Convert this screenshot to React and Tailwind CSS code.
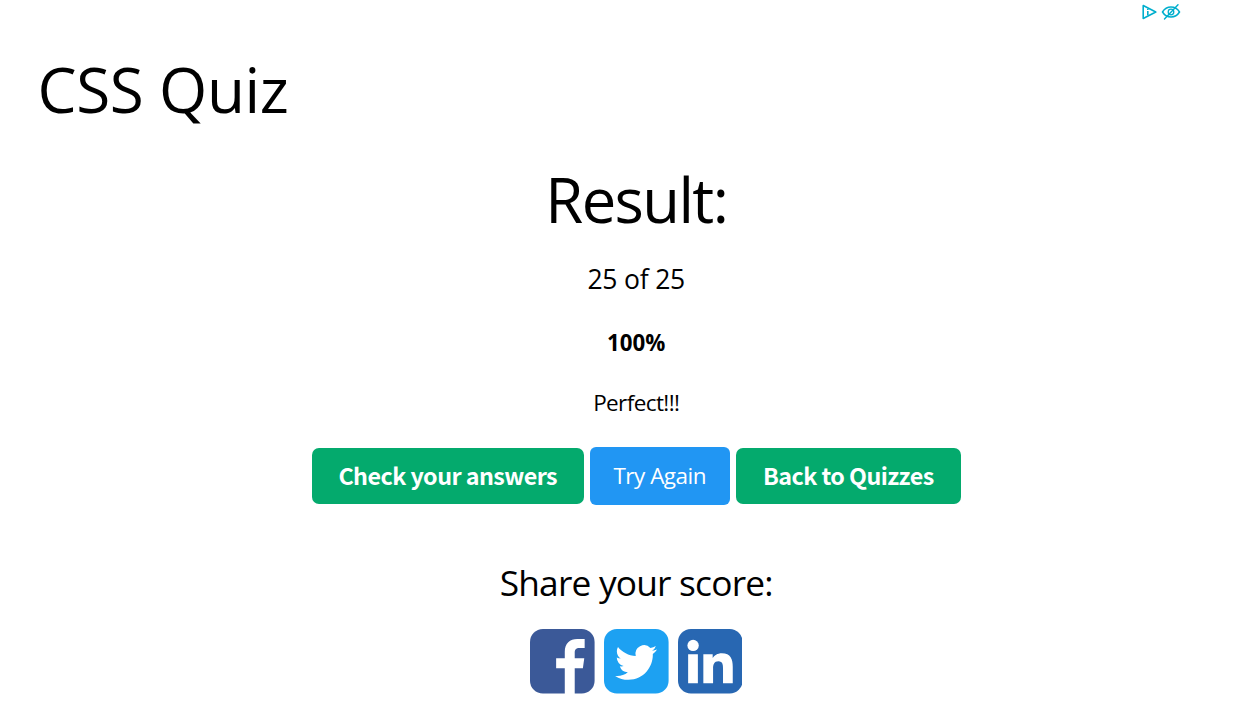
const GREEN =
  "flex h-14 items-center justify-center rounded-[7px] bg-[#04aa6d] pb-[2px] font-['Noto_Sans_CJK_SC',sans-serif] text-[23.3px] font-bold tracking-[-0.55px] text-white whitespace-nowrap";

function AdIcons() {
  return (
    <div className="flex h-6 justify-end gap-[4px] pt-[4px] pr-[74px]">
      <svg width="16" height="16" viewBox="0 0 16 16" fill="none" stroke="#00aecd" strokeWidth="1.6" strokeLinejoin="round">
        <path d="M2.2 1.5v13L14.8 8z" />
        <path d="M6.8 7v4.3M6.8 4.7v1.3" />
      </svg>
      <svg width="20" height="16" viewBox="0 0 20 16" fill="none" stroke="#00aecd" strokeWidth="1.5" strokeLinecap="round">
        <path d="M1.5 8C5.5 1.4 14.5 1.4 18.5 8C14.5 14.6 5.5 14.6 1.5 8z" />
        <circle cx="10" cy="8" r="2.8" strokeWidth="1.3" />
        <path d="M3.5 15L17 0.8" strokeWidth="1.4" />
      </svg>
    </div>
  );
}

function ShareIcons() {
  return (
    <div className="flex gap-[9px]">
      <svg width="64.6" height="64.6" viewBox="0 0 65 65">
        <rect width="65" height="65" rx="13" fill="#3b5998" />
        <path fill="#fff" d="M35 66V39.5h-8.7v-10H35v-6.7C35 14.2 40.2 10 47.5 10H55v9.2h-5c-4 0-5 1.8-5 4.9v5.4h9.6l-1.4 10H45V66z" />
      </svg>
      <svg width="64.6" height="64.6" viewBox="0 0 65 65">
        <rect width="65" height="65" rx="13" fill="#1da1f2" />
        <path
          fill="#fff"
          transform="translate(11.2 12.4) scale(1.76 1.78)"
          d="M23.953 4.57a10 10 0 01-2.825.775 4.958 4.958 0 002.163-2.723c-.951.555-2.005.959-3.127 1.184a4.92 4.92 0 00-8.384 4.482C7.69 8.095 4.067 6.13 1.64 3.162a4.822 4.822 0 00-.666 2.475c0 1.71.87 3.213 2.188 4.096a4.904 4.904 0 01-2.228-.616v.06a4.923 4.923 0 003.946 4.827 4.996 4.996 0 01-2.212.085 4.936 4.936 0 004.604 3.417 9.867 9.867 0 01-6.102 2.105c-.39 0-.779-.023-1.17-.067a13.995 13.995 0 007.557 2.209c9.053 0 13.998-7.496 13.998-13.985 0-.21 0-.42-.015-.63A9.935 9.935 0 0024 4.59z"
        />
      </svg>
      <svg width="64.6" height="64.6" viewBox="0 0 65 65">
        <rect width="65" height="65" rx="13" fill="#2867b2" />
        <g fill="#fff">
          <circle cx="15.2" cy="16.5" r="5.7" />
          <path d="M10.2 25.3H20v29.4h-9.8zM25.5 25.3h9.4v4c1.4-2.7 4.8-5 9.2-5 9 0 11 6 11 13.7v16.7h-9.8V39.7c0-3.6-.3-7.3-4.6-7.3-4.4 0-5.4 3.5-5.4 7.1v15.2h-9.8z" />
        </g>
      </svg>
    </div>
  );
}

export default function App() {
  return (
    <div className="h-[708px] w-[1255px] overflow-hidden bg-white font-['Open_Sans','Noto_Sans',sans-serif] text-black">
      <AdIcons />
      <h1 className="mt-[27px] pl-[37.5px] text-[62px] leading-[76px] tracking-[-0.4px]">CSS Quiz</h1>
      <main className="flex flex-col items-center pl-[17.5px]">
        <h2 className="mt-[34px] text-[61.5px] leading-[76px] tracking-[-1.6px]">Result:</h2>
        <p className="mt-[22px] text-[26.5px] leading-[40px] tracking-[-0.2px]">25 of 25</p>
        <p className="mt-[27px] text-[22.3px] leading-[34px] font-bold">100%</p>
        <p className="mt-[26px] text-[22.5px] leading-[34px] tracking-[-0.6px]">Perfect!!!</p>
        <div className="mt-[27px] flex items-center gap-[6px]">
          <button className={`${GREEN} w-[272px]`}>Check your answers</button>
          <button className="h-[58px] w-[140px] rounded-[6px] bg-[#2196f3] text-[22.5px] tracking-[-0.5px] whitespace-nowrap text-white">
            Try Again
          </button>
          <button className={`${GREEN} w-[225px]`}>Back to Quizzes</button>
        </div>
        <h3 className="mt-[52px] mb-[22px] text-[35.3px] leading-[50px] tracking-[-0.8px]">Share your score:</h3>
        <ShareIcons />
      </main>
    </div>
  );
}
